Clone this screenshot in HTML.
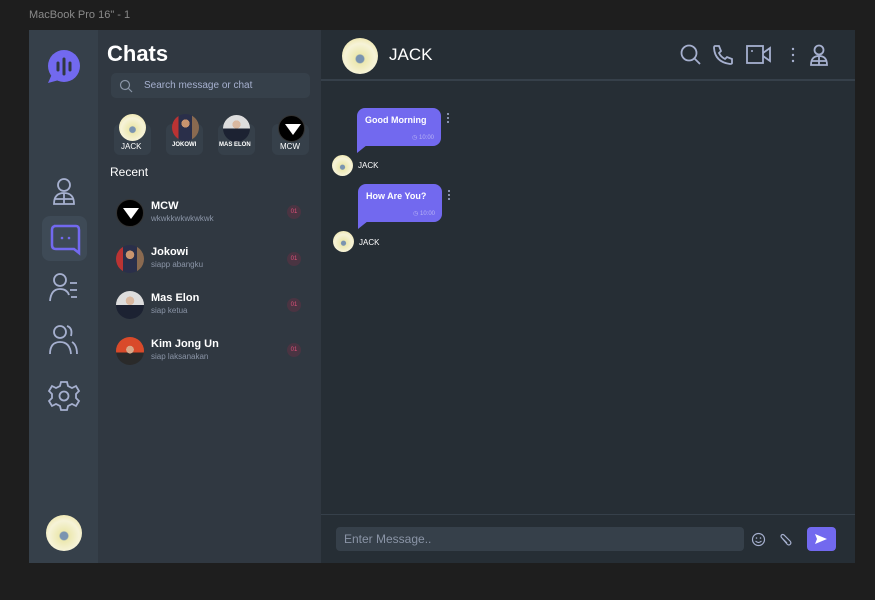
<!DOCTYPE html>
<html><head><style>
*{margin:0;padding:0;box-sizing:border-box}
body{width:875px;height:600px;background:#1e1e1e;font-family:"Liberation Sans",sans-serif;position:relative;overflow:hidden}
.a{position:absolute}
.t{color:#fff}
.av{border-radius:50%;position:absolute;overflow:hidden}
.jack{background:radial-gradient(circle at 50% 58%,#7a94b0 0 14%,#ece8b0 18%,#f6f3d8 55%,#e8dc8a 100%)}
.jok{background:radial-gradient(circle at 50% 35%,#c9946e 0 18%,transparent 19%),linear-gradient(90deg,#b33 0 25%,#2a2f4a 25% 75%,#8a6a50 75%)}
.elon{background:radial-gradient(circle at 50% 35%,#d9b8a0 0 18%,transparent 19%),linear-gradient(#ddd 0 50%,#1c2232 50%)}
.mcw{background:#000;border:1px solid #333}
.mcw::after{content:"";position:absolute;left:22%;top:32%;width:0;height:0;border-left:8px solid transparent;border-right:8px solid transparent;border-top:11px solid #fff}
.kim{background:radial-gradient(circle at 50% 45%,#d8a888 0 18%,transparent 19%),linear-gradient(#d94a2a 0 55%,#2a2a2a 55%)}
.badge{position:absolute;left:287px;width:14px;height:14px;border-radius:50%;background:#4a3442;color:#e0507a;font-size:6px;text-align:center;line-height:14px}
.msg{background:#7269ef;border-radius:8px 8px 8px 0;position:absolute;color:#fff;font-size:9px;font-weight:bold}
.ic{stroke:#a6b0cf;fill:none;stroke-width:1.8}
</style></head><body>
<div class="a" style="left:29px;top:9px;color:#8a8a8a;font-size:11px">MacBook Pro 16" - 1</div>
<div class="a" style="left:29px;top:30px;width:69px;height:533px;background:#36404a"></div>
<div class="a" style="left:98px;top:30px;width:223px;height:533px;background:#303841"></div>
<div class="a" style="left:321px;top:30px;width:534px;height:533px;background:#262e35"></div>
<div class="a" style="left:321px;top:79px;width:534px;height:2px;background:#36404a"></div>
<div class="a" style="left:321px;top:514px;width:534px;height:1px;background:#36404a"></div>
<svg class="a" style="left:47px;top:50px" width="34" height="34"><circle cx="17" cy="16" r="16" fill="#7269ef"/><path d="M1 33 L5 24 L12 30Z" fill="#7269ef"/><g stroke="#303841" stroke-width="3" stroke-linecap="round"><line x1="11" y1="13" x2="11" y2="20"/><line x1="17" y1="9" x2="17" y2="24"/><line x1="23" y1="13" x2="23" y2="20"/></g></svg>
<svg class="a" style="left:50px;top:176px" width="28" height="30"><circle cx="14" cy="9" r="6" class="ic"/><path d="M4 28 Q4 17 14 17 Q24 17 24 28Z M4 23 H24 M14 17 V28" class="ic"/></svg>
<div class="a" style="left:42px;top:216px;width:45px;height:45px;border-radius:8px;background:#3e4a56"></div>
<svg class="a" style="left:48px;top:222px" width="34" height="34"><path d="M6 4 H28 Q31 4 31 8 V31 L26 27 H8 Q4 27 4 23 V8 Q4 4 8 4Z" stroke="#7269ef" stroke-width="2.5" fill="none"/><circle cx="14" cy="16" r="1.3" fill="#7269ef"/><circle cx="21" cy="16" r="1.3" fill="#7269ef"/></svg>
<svg class="a" style="left:47px;top:270px" width="34" height="34"><circle cx="13" cy="10" r="6" class="ic"/><path d="M3 31 Q4 19 13 19 Q20 19 22 25" class="ic"/><path d="M23 13 H30 M23 20 H30 M24 27 H30" class="ic"/></svg>
<svg class="a" style="left:47px;top:322px" width="34" height="34"><circle cx="13" cy="10" r="6" class="ic"/><path d="M3 32 Q3 20 13 20 Q23 20 24 32" class="ic"/><path d="M20 4 Q26 6 24 14 M25 20 Q30 23 30 32" class="ic"/></svg>
<svg class="a" style="left:47px;top:379px" width="34" height="34"><path d="M14 3 H20 L21 7 L25 9 L29 7 L32 12 L29 15 V19 L32 22 L29 27 L25 25 L21 27 L20 31 H14 L13 27 L9 25 L5 27 L2 22 L5 19 V15 L2 12 L5 7 L9 9 L13 7Z" class="ic"/><circle cx="17" cy="17" r="4.5" class="ic"/></svg>
<div class="av jack" style="left:46px;top:515px;width:36px;height:36px"></div>
<div class="a t" style="left:107px;top:41px;font-size:22px;font-weight:bold">Chats</div>
<div class="a" style="left:111px;top:73px;width:199px;height:25px;border-radius:5px;background:#36404a"></div>
<svg class="a" style="left:119px;top:79px" width="14" height="14"><circle cx="6" cy="6" r="4.5" stroke="#8a94a6" fill="none" stroke-width="1.2"/><line x1="9.5" y1="9.5" x2="13" y2="13" stroke="#8a94a6" stroke-width="1.2"/></svg>
<div class="a" style="left:144px;top:80px;font-size:10px;color:#a6b0cf">Search message or chat</div>
<div class="a" style="left:114px;top:124px;width:37px;height:31px;border-radius:6px;background:#36404a"></div>
<div class="a" style="left:166px;top:124px;width:37px;height:31px;border-radius:6px;background:#36404a"></div>
<div class="a" style="left:218px;top:124px;width:37px;height:31px;border-radius:6px;background:#36404a"></div>
<div class="a" style="left:272px;top:124px;width:37px;height:31px;border-radius:6px;background:#36404a"></div>
<div class="av jack" style="left:119px;top:114px;width:27px;height:27px"></div>
<div class="av jok" style="left:172px;top:114px;width:27px;height:27px"></div>
<div class="av elon" style="left:223px;top:115px;width:27px;height:27px"></div>
<div class="av mcw" style="left:278px;top:115px;width:27px;height:27px"></div>
<div class="a t" style="left:121px;top:142px;font-size:8px">JACK</div>
<div class="a t" style="left:172px;top:142px;font-size:6px;font-weight:bold">JOKOWI</div>
<div class="a t" style="left:219px;top:142px;font-size:6px;font-weight:bold">MAS ELON</div>
<div class="a t" style="left:280px;top:142px;font-size:8px">MCW</div>
<div class="a t" style="left:110px;top:165px;font-size:12px">Recent</div>
<div class="av mcw" style="left:116px;top:199px;width:28px;height:28px"></div>
<div class="av jok" style="left:116px;top:245px;width:28px;height:28px"></div>
<div class="av elon" style="left:116px;top:291px;width:28px;height:28px"></div>
<div class="av kim" style="left:116px;top:337px;width:28px;height:28px"></div>
<div class="a t" style="left:151px;top:200px;font-size:11px;font-weight:bold">MCW</div>
<div class="a" style="left:151px;top:214px;font-size:8px;color:#8a94a6">wkwkkwkwkwkwk</div>
<div class="a t" style="left:151px;top:246px;font-size:11px;font-weight:bold">Jokowi</div>
<div class="a" style="left:151px;top:260px;font-size:8px;color:#8a94a6">siapp abangku</div>
<div class="a t" style="left:151px;top:292px;font-size:11px;font-weight:bold">Mas Elon</div>
<div class="a" style="left:151px;top:306px;font-size:8px;color:#8a94a6">siap ketua</div>
<div class="a t" style="left:151px;top:338px;font-size:11px;font-weight:bold">Kim Jong Un</div>
<div class="a" style="left:151px;top:352px;font-size:8px;color:#8a94a6">siap laksanakan</div>
<div class="badge" style="top:205px">01</div>
<div class="badge" style="top:252px">01</div>
<div class="badge" style="top:298px">01</div>
<div class="badge" style="top:343px">01</div>
<div class="av jack" style="left:342px;top:38px;width:36px;height:36px"></div>
<div class="a t" style="left:389px;top:45px;font-size:17px">JACK</div>
<svg class="a" style="left:680px;top:44px" width="22" height="22"><circle cx="9" cy="9" r="7.5" class="ic"/><line x1="14.5" y1="14.5" x2="20" y2="20" class="ic"/></svg>
<svg class="a" style="left:712px;top:44px" width="22" height="22"><path d="M3 2 L7 2 L9 7 L7 9 Q9 13 13 15 L15 13 L20 15 V19 Q20 20 18 20 Q3 18 2 4 Q2 2 3 2Z" class="ic"/></svg>
<svg class="a" style="left:746px;top:44px" width="26" height="22"><rect x="1" y="2" width="16" height="17" class="ic"/><path d="M17 9 L24 4 V17 L17 12" class="ic"/><circle cx="6" cy="7" r="1" fill="#a6b0cf"/></svg>
<svg class="a" style="left:790px;top:46px" width="6" height="18"><circle cx="3" cy="3" r="1.2" fill="#a6b0cf"/><circle cx="3" cy="9" r="1.2" fill="#a6b0cf"/><circle cx="3" cy="15" r="1.2" fill="#a6b0cf"/></svg>
<svg class="a" style="left:809px;top:44px" width="20" height="22"><circle cx="10" cy="6" r="4.5" class="ic"/><path d="M2 21 Q2 12 10 12 Q18 12 18 21Z M2 17 H18 M10 12 V21" class="ic" stroke-width="1.6"/></svg>
<div class="msg" style="left:357px;top:108px;width:84px;height:38px"><div style="position:absolute;left:8px;top:7px">Good Morning</div><div style="position:absolute;right:7px;top:26px;font-size:6px;color:#b8b3f5;font-weight:normal">◷ 10:00</div></div>
<svg class="a" style="left:357px;top:145px" width="10" height="8"><path d="M0 0 H10 L0 8Z" fill="#7269ef"/></svg>
<svg class="a" style="left:446px;top:112px" width="4" height="12"><circle cx="2" cy="2" r="1" fill="#a6b0cf"/><circle cx="2" cy="6" r="1" fill="#a6b0cf"/><circle cx="2" cy="10" r="1" fill="#a6b0cf"/></svg>
<div class="av jack" style="left:332px;top:155px;width:21px;height:21px"></div>
<div class="a t" style="left:358px;top:161px;font-size:8px">JACK</div>
<div class="msg" style="left:358px;top:184px;width:84px;height:38px"><div style="position:absolute;left:8px;top:7px">How Are You?</div><div style="position:absolute;right:7px;top:26px;font-size:6px;color:#b8b3f5;font-weight:normal">◷ 10:00</div></div>
<svg class="a" style="left:358px;top:221px" width="10" height="8"><path d="M0 0 H10 L0 8Z" fill="#7269ef"/></svg>
<svg class="a" style="left:447px;top:189px" width="4" height="12"><circle cx="2" cy="2" r="1" fill="#a6b0cf"/><circle cx="2" cy="6" r="1" fill="#a6b0cf"/><circle cx="2" cy="10" r="1" fill="#a6b0cf"/></svg>
<div class="av jack" style="left:333px;top:231px;width:21px;height:21px"></div>
<div class="a t" style="left:359px;top:238px;font-size:8px">JACK</div>
<div class="a" style="left:336px;top:527px;width:408px;height:24px;border-radius:4px;background:#36404a"></div>
<div class="a" style="left:344px;top:532px;font-size:12px;color:#8a94a6">Enter Message..</div>
<svg class="a" style="left:751px;top:532px" width="15" height="15"><circle cx="7.5" cy="7.5" r="6" stroke="#a6b0cf" fill="none" stroke-width="1.2"/><circle cx="5.5" cy="6" r=".8" fill="#a6b0cf"/><circle cx="9.5" cy="6" r=".8" fill="#a6b0cf"/><path d="M4.5 9 Q7.5 12 10.5 9" stroke="#a6b0cf" fill="none" stroke-width="1.1"/></svg>
<svg class="a" style="left:779px;top:533px" width="13" height="13"><path d="M3 5 L8 11 Q10 13 11.5 11 Q12.5 9.5 11 8 L5 2 Q3.5 1 2.5 2 Q1.5 3 2.5 4.5 L8 10" stroke="#a6b0cf" fill="none" stroke-width="1.2"/></svg>
<div class="a" style="left:807px;top:527px;width:29px;height:24px;border-radius:4px;background:#7269ef"></div>
<svg class="a" style="left:814px;top:533px" width="14" height="12"><path d="M1 1 L13 6 L1 11 L3 6Z" fill="#fff"/></svg>
</body></html>
